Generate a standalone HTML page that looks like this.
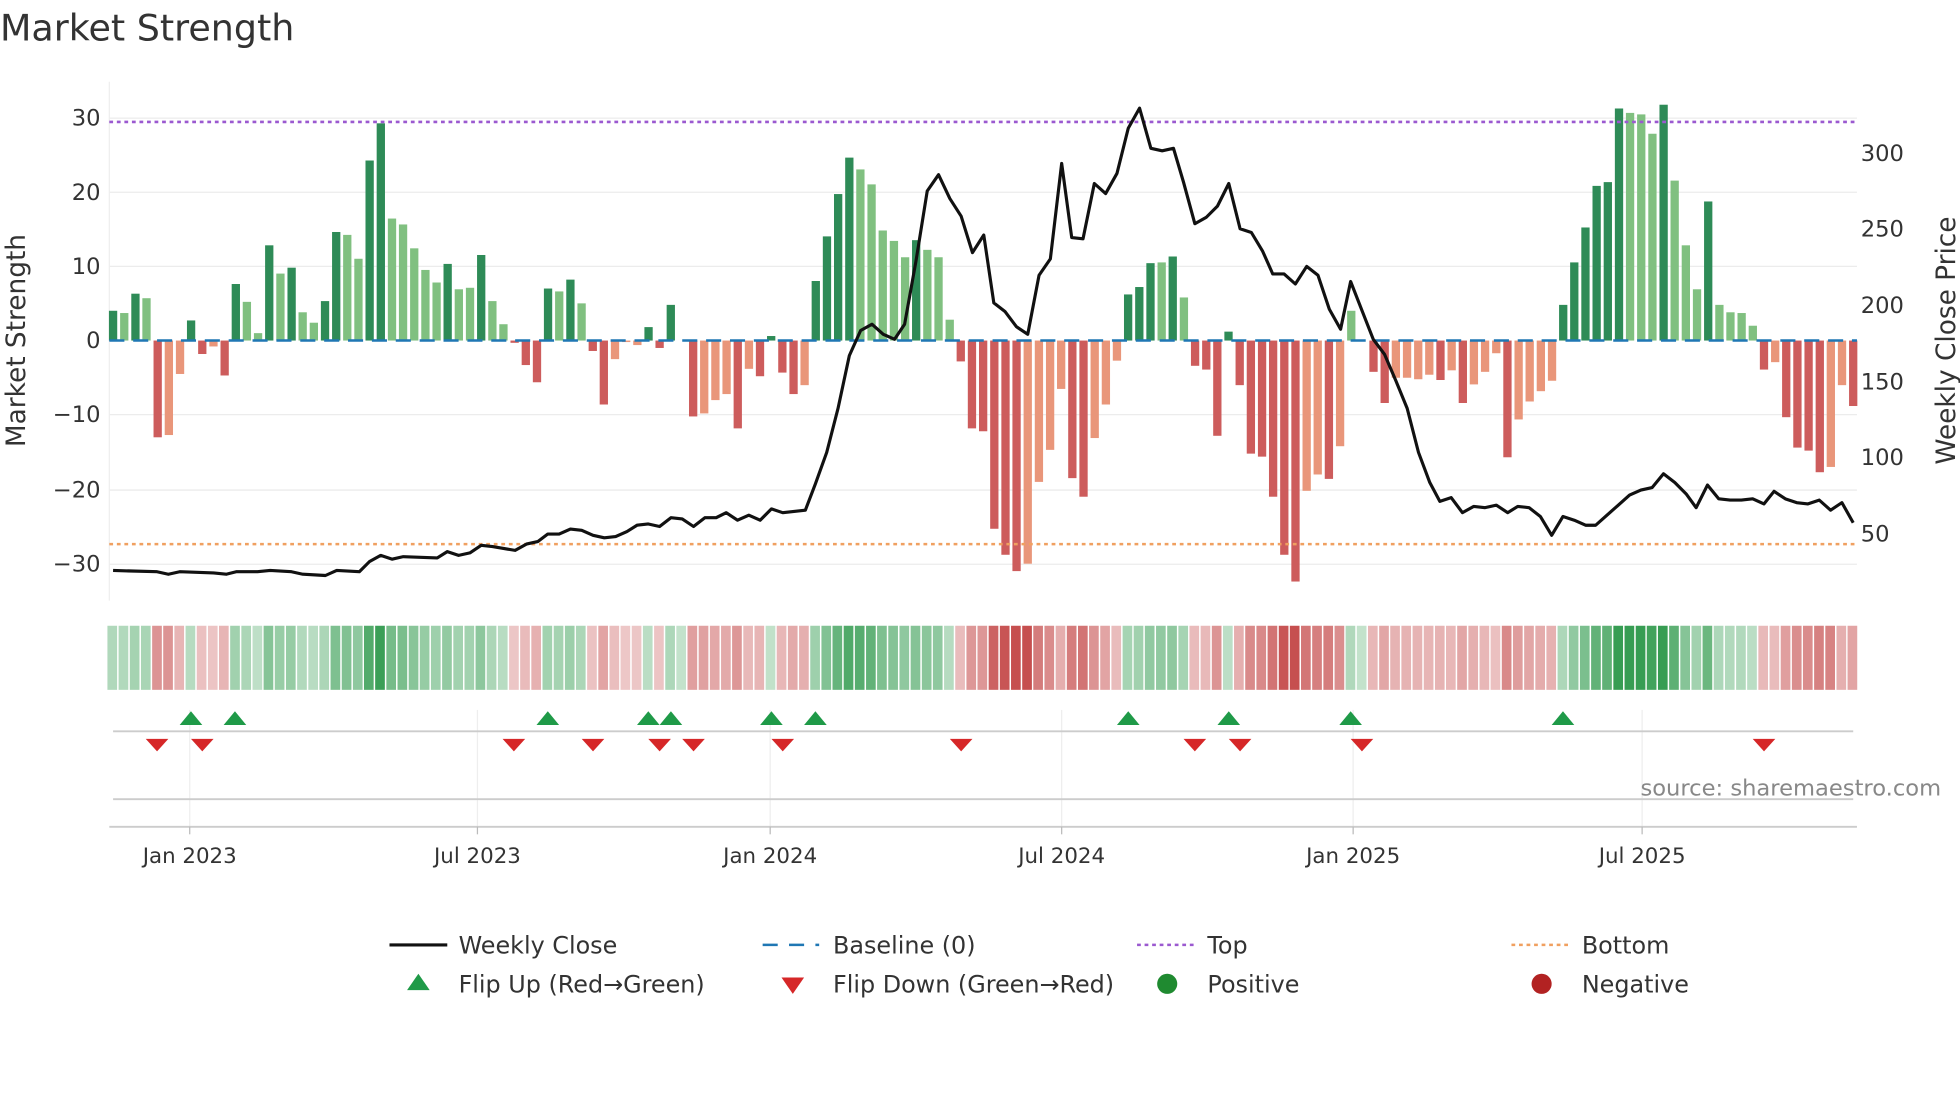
<!DOCTYPE html>
<html><head><meta charset="utf-8"><style>
html,body{margin:0;padding:0;background:#fff;}
svg{display:block;font-family:"DejaVu Sans","Liberation Sans",sans-serif;}
</style></head><body>
<svg id="s" width="1960" height="1102" viewBox="0 0 1560 877" xmlns="http://www.w3.org/2000/svg">
<rect width="1560" height="877" fill="#fff"/>
<text x="0" y="32" font-size="29" fill="#333">Market Strength</text>
<g stroke="#ececec" stroke-width="1">
<line x1="87" x2="1478" y1="94" y2="94"/><line x1="87" x2="1478" y1="153" y2="153"/><line x1="87" x2="1478" y1="212" y2="212"/><line x1="87" x2="1478" y1="330" y2="330"/><line x1="87" x2="1478" y1="390" y2="390"/><line x1="87" x2="1478" y1="449" y2="449"/>
</g>
<line x1="87" x2="87" y1="65" y2="478" stroke="#eee"/>
<g font-size="18" fill="#333" text-anchor="end">
<text x="80" y="100">30</text><text x="80" y="159">20</text><text x="80" y="218">10</text><text x="80" y="277">0</text><text x="80" y="336">−10</text><text x="80" y="396">−20</text><text x="80" y="455">−30</text>
</g>
<g font-size="18" fill="#333">
<text x="1481" y="128">300</text><text x="1481" y="188">250</text><text x="1481" y="249">200</text><text x="1481" y="310">150</text><text x="1481" y="370">100</text><text x="1481" y="431">50</text>
</g>
<text transform="translate(20,271) rotate(-90)" font-size="21" fill="#333" text-anchor="middle">Market Strength</text>
<text transform="translate(1556,271) rotate(-90)" font-size="21" fill="#333" text-anchor="middle">Weekly Close Price</text>
<g id="bars"></g>
<line x1="87" x2="1478" y1="271" y2="271" stroke="#1f77b4" stroke-width="2" stroke-dasharray="12,7"/>
<line x1="87" x2="1478" y1="97" y2="97" stroke="#9b59d0" stroke-width="2" stroke-dasharray="3,3"/>
<line x1="87" x2="1478" y1="433" y2="433" stroke="#f0a060" stroke-width="2" stroke-dasharray="3,3"/>
<polyline id="price" fill="none" stroke="#111" stroke-width="2.5" stroke-linejoin="round"/>
<g id="heat"></g>
<g stroke="#eee"><line x1="151" x2="151" y1="565" y2="658"/><line x1="380" x2="380" y1="565" y2="658"/><line x1="613" x2="613" y1="565" y2="658"/><line x1="845" x2="845" y1="565" y2="658"/><line x1="1077" x2="1077" y1="565" y2="658"/><line x1="1307" x2="1307" y1="565" y2="658"/></g>
<line x1="90" x2="1475" y1="582" y2="582" stroke="#ccc" stroke-width="1.5"/>
<line x1="90" x2="1475" y1="636" y2="636" stroke="#ccc" stroke-width="1.5"/>
<g id="flips"></g>
<text x="1545" y="633" font-size="18" fill="#888" text-anchor="end">source: sharemaestro.com</text>
<line x1="87" x2="1478" y1="658" y2="658" stroke="#ccc" stroke-width="1.5"/>
<g stroke="#bbb"><line x1="151" x2="151" y1="658" y2="664"/><line x1="380" x2="380" y1="658" y2="664"/><line x1="613" x2="613" y1="658" y2="664"/><line x1="845" x2="845" y1="658" y2="664"/><line x1="1077" x2="1077" y1="658" y2="664"/><line x1="1307" x2="1307" y1="658" y2="664"/></g>
<g font-size="17" fill="#333" text-anchor="middle">
<text x="151" y="687">Jan 2023</text><text x="380" y="687">Jul 2023</text><text x="613" y="687">Jan 2024</text><text x="845" y="687">Jul 2024</text><text x="1077" y="687">Jan 2025</text><text x="1307" y="687">Jul 2025</text>
</g>
<g font-size="19" fill="#333">
<line x1="310" x2="356" y1="752" y2="752" stroke="#111" stroke-width="2.5"/><text x="365" y="759">Weekly Close</text>
<line x1="607" x2="652" y1="752" y2="752" stroke="#1f77b4" stroke-width="2" stroke-dasharray="12,9"/><text x="663" y="759">Baseline (0)</text>
<line x1="905" x2="950" y1="752" y2="752" stroke="#9b59d0" stroke-width="2" stroke-dasharray="3,3"/><text x="961" y="759">Top</text>
<line x1="1203" x2="1248" y1="752" y2="752" stroke="#f0a060" stroke-width="2" stroke-dasharray="3,3"/><text x="1259" y="759">Bottom</text>
<polygon points="324,788 342,788 333,775" fill="#1f9a48"/><text x="365" y="790">Flip Up (Red→Green)</text>
<polygon points="622,778 640,778 631,791" fill="#d62728"/><text x="663" y="790">Flip Down (Green→Red)</text>
<circle cx="929" cy="783" r="8" fill="#1f8a30"/><text x="961" y="790">Positive</text>
<circle cx="1227" cy="783" r="8" fill="#b22222"/><text x="1259" y="790">Negative</text>
</g>
</svg>
<script>
var v=[[4,'d'],[3.7,'l'],[6.3,'d'],[5.7,'l'],[-13,'r'],[-12.7,'s'],[-4.5,'s'],[2.7,'d'],[-1.8,'r'],[-0.8,'s'],[-4.7,'r'],[7.6,'d'],[5.2,'l'],[1,'l'],[12.8,'d'],[9,'l'],[9.8,'d'],[3.8,'l'],[2.4,'l'],[5.3,'d'],[14.6,'d'],[14.2,'l'],[11,'l'],[24.2,'d'],[29.2,'d'],[16.4,'l'],[15.6,'l'],[12.4,'l'],[9.5,'l'],[7.8,'l'],[10.3,'d'],[6.9,'l'],[7.1,'l'],[11.5,'d'],[5.3,'l'],[2.2,'l'],[-0.3,'r'],[-3.3,'r'],[-5.6,'r'],[7,'d'],[6.6,'l'],[8.2,'d'],[5,'l'],[-1.4,'r'],[-8.6,'r'],[-2.5,'s'],[-0.2,'s'],[-0.6,'s'],[1.8,'d'],[-1,'r'],[4.8,'d'],[0,'s'],[-10.2,'r'],[-9.8,'s'],[-8,'s'],[-7.2,'s'],[-11.8,'r'],[-3.8,'s'],[-4.8,'r'],[0.6,'d'],[-4.3,'r'],[-7.2,'r'],[-6,'s'],[8,'d'],[14,'d'],[19.7,'d'],[24.6,'d'],[23,'l'],[21,'l'],[14.8,'l'],[13.4,'l'],[11.2,'l'],[13.5,'d'],[12.2,'l'],[11.2,'l'],[2.8,'l'],[-2.8,'r'],[-11.8,'r'],[-12.2,'r'],[-25.3,'r'],[-28.8,'r'],[-31,'r'],[-30,'s'],[-19,'s'],[-14.7,'s'],[-6.5,'s'],[-18.5,'r'],[-21,'r'],[-13.1,'s'],[-8.6,'s'],[-2.7,'s'],[6.2,'d'],[7.2,'d'],[10.4,'d'],[10.5,'l'],[11.3,'d'],[5.8,'l'],[-3.4,'r'],[-3.9,'r'],[-12.8,'r'],[1.2,'d'],[-6,'r'],[-15.2,'r'],[-15.6,'r'],[-21,'r'],[-28.8,'r'],[-32.4,'r'],[-20.2,'s'],[-18,'s'],[-18.6,'r'],[-14.2,'s'],[4,'l'],[0,'s'],[-4.2,'r'],[-8.4,'r'],[-5,'s'],[-5,'s'],[-5.2,'s'],[-4.6,'s'],[-5.3,'r'],[-4,'s'],[-8.4,'r'],[-5.9,'s'],[-4.2,'s'],[-1.7,'s'],[-15.7,'r'],[-10.6,'s'],[-8.2,'s'],[-6.8,'s'],[-5.4,'s'],[4.8,'d'],[10.5,'d'],[15.2,'d'],[20.8,'d'],[21.3,'d'],[31.2,'d'],[30.6,'l'],[30.4,'l'],[27.8,'l'],[31.7,'d'],[21.5,'l'],[12.8,'l'],[6.9,'l'],[18.7,'d'],[4.8,'l'],[3.8,'l'],[3.7,'l'],[2,'l'],[-3.9,'r'],[-2.9,'s'],[-10.3,'r'],[-14.4,'r'],[-14.8,'r'],[-17.7,'r'],[-17,'s'],[-6,'s'],[-8.8,'r']];
var C={d:'#2e8b57',l:'#80c080',r:'#cd5c5c',s:'#e9967a'};
var b='',h='';
var step=1385/(v.length-1);
for(var i=0;i<v.length;i++){var x=90+step*i,val=v[i][0],y0=271,y1=271-5.92*val;
b+='<rect x="'+(x-3.3).toFixed(1)+'" y="'+Math.min(y0,y1).toFixed(1)+'" width="6.6" height="'+Math.abs(y1-y0).toFixed(1)+'" fill="'+C[v[i][1]]+'"/>';
var a=Math.min(Math.abs(val)/30,1),col;
if(val>=0){col='rgba(40,150,70,'+(0.28+0.65*a).toFixed(2)+')';}else{col='rgba(195,70,70,'+(0.3+0.65*a).toFixed(2)+')';}
h+='<rect x="'+(x-4.45).toFixed(1)+'" y="498" width="'+(step-1.2).toFixed(1)+'" height="51" fill="'+col+'"/>';}
document.getElementById('bars').innerHTML=b;document.getElementById('heat').innerHTML=h;
document.getElementById('price').setAttribute('points',"90,454 125,455 134,457 143,455 170,456 180,457 188,455 205,455 215,454 232,455 241,457 259,458 268,454 286,455 294,447 303,442 312,445 321,443 348,444 356,439 365,442 374,440 383,434 392,435 410,438 419,433 428,431 436,425 445,425 454,421 463,422 472,426 481,428 490,427 499,423 507,418 516,417 525,419 534,412 543,413 552,419 561,412 570,412 578,408 587,414 596,410 605,414 614,405 623,408 641,406 649,385 658,360 667,325 676,283 685,263 694,258 703,266 712,270 720,258 729,208 738,152 747,139 756,158 765,172 774,201 783,187 791,241 800,248 809,260 818,266 827,219 836,206 845,130 853,189 862,190 871,146 880,154 889,138 898,102 907,86 916,118 925,120 934,118 942,145 951,178 960,173 969,164 978,146 987,182 996,185 1005,200 1013,218 1022,218 1031,226 1040,212 1049,219 1058,246 1067,262 1075,224 1084,247 1093,270 1102,282 1111,303 1120,325 1129,360 1138,384 1146,399 1155,396 1164,408 1173,403 1182,404 1191,402 1200,408 1208,403 1217,404 1226,411 1235,426 1244,411 1253,414 1262,418 1270,418 1279,410 1288,402 1297,394 1306,390 1315,388 1324,377 1333,384 1342,393 1350,404 1359,386 1368,397 1377,398 1386,398 1395,397 1404,401 1412,391 1421,397 1430,400 1439,401 1448,398 1457,406 1466,400 1475,416");
var up=[152,187,436,516,534,614,649,898,978,1075,1244],dn=[125,161,409,472,525,552,623,765,951,987,1084,1404],f='';
up.forEach(function(x){f+='<polygon points="'+(x-9)+',577 '+(x+9)+',577 '+x+',566" fill="#1f9a48"/>';});
dn.forEach(function(x){f+='<polygon points="'+(x-9)+',588 '+(x+9)+',588 '+x+',598" fill="#d62728"/>';});
document.getElementById('flips').innerHTML=f;
</script>
</body></html>
